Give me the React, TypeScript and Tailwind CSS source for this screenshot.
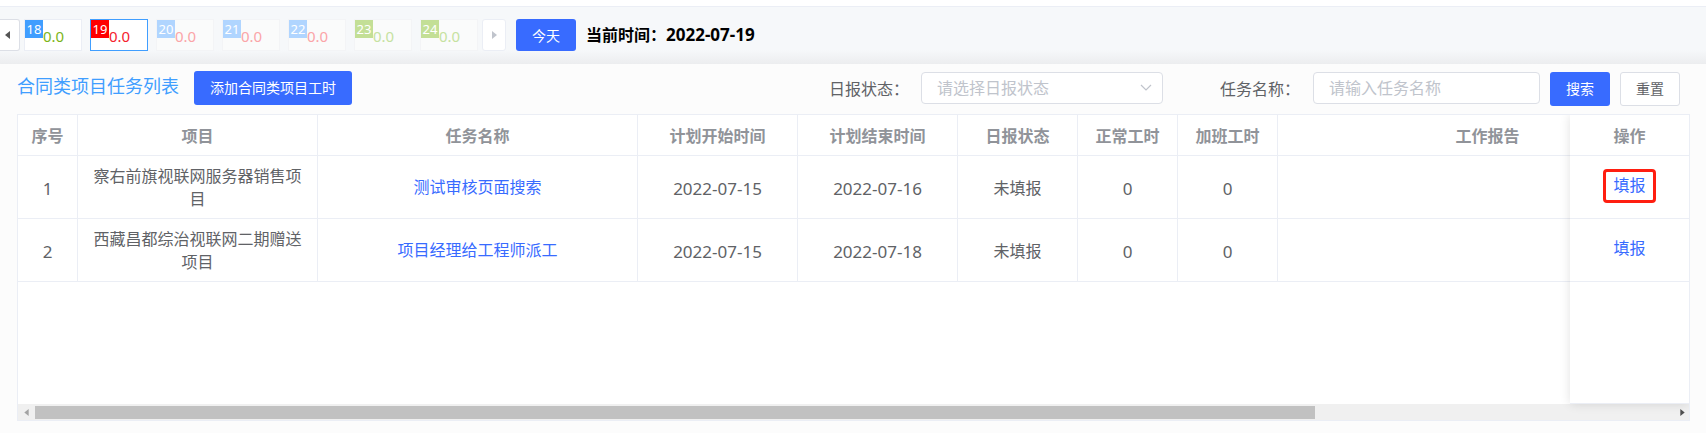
import React from "react";

type Day = { day: string; hours: string; card: string; badge: string; text: string };

const upcoming = "border-[#f3f4f6] bg-[#fafbfb]";
const days: Day[] = [
  { day: "18", hours: "0.0", card: "border-[#ebeef5] bg-white", badge: "bg-[#409eff]", text: "text-[#7cb518]" },
  { day: "19", hours: "0.0", card: "border-[#409eff] bg-white", badge: "bg-[#ff0000]", text: "text-[#f5222d]" },
  { day: "20", hours: "0.0", card: upcoming, badge: "bg-[#b0d5ff]", text: "text-[#fba5a8]" },
  { day: "21", hours: "0.0", card: upcoming, badge: "bg-[#b0d5ff]", text: "text-[#fba5a8]" },
  { day: "22", hours: "0.0", card: upcoming, badge: "bg-[#b0d5ff]", text: "text-[#fba5a8]" },
  { day: "23", hours: "0.0", card: upcoming, badge: "bg-[#c3df96]", text: "text-[#c6e2a0]" },
  { day: "24", hours: "0.0", card: upcoming, badge: "bg-[#c3df96]", text: "text-[#c6e2a0]" },
];

const columns = [
  { title: "序号", width: "w-[60px]" },
  { title: "项目", width: "w-[240px]" },
  { title: "任务名称", width: "w-[320px]" },
  { title: "计划开始时间", width: "w-[160px]" },
  { title: "计划结束时间", width: "w-[160px]" },
  { title: "日报状态", width: "w-[120px]" },
  { title: "正常工时", width: "w-[100px]" },
  { title: "加班工时", width: "w-[100px]" },
  { title: "工作报告", width: "w-[420px]" },
];

const rows = [
  { id: 1, project: "察右前旗视联网服务器销售项目", task: "测试审核页面搜索", start: "2022-07-15", end: "2022-07-16", status: "未填报", normal: 0, extra: 0, marked: true },
  { id: 2, project: "西藏昌都综治视联网二期赠送项目", task: "项目经理给工程师派工", start: "2022-07-15", end: "2022-07-18", status: "未填报", normal: 0, extra: 0, marked: false },
];

const cell = "border-b border-r border-[#ebeef5] px-[10px] pt-[9px] pb-[7px] text-center";
const linkCell = "border-b border-r border-[#ebeef5] px-[10px] py-2 text-center";
const numeric = "text-[17px]";

function Triangle({ left, className }: { left?: boolean; className: string }) {
  return (
    <svg viewBox="0 0 5 8" className={className} fill="currentColor" aria-hidden="true">
      <path d={left ? "M5 0v8L0 4z" : "M0 0v8l5-4z"} />
    </svg>
  );
}

function DayStrip() {
  return (
    <div className="flex items-center border-t border-[#ebeef5] bg-[#f6f8fa] bg-[linear-gradient(to_top,#ecedef,#f6f8fa_14px)] pt-3 pb-[13px]">
      <button aria-label="前一周" className="flex h-8 w-5 items-center justify-center rounded-r-[3px] border border-l-0 border-[#dcdfe6] bg-white pr-1 text-[#555]">
        <Triangle left className="h-2 w-[5px]" />
      </button>
      <div className="ml-1 flex gap-2">
        {days.map((d) => (
          <button key={d.day} className={`flex h-8 w-[58px] items-start border ${d.card}`}>
            <span className={`h-[18px] w-[18px] text-center text-[13px] leading-[18px] text-white ${d.badge}`}>{d.day}</span>
            <span className={`pt-1 text-[15px] leading-6 ${d.text}`}>{d.hours}</span>
          </button>
        ))}
      </div>
      <button aria-label="后一周" className="ml-1 flex h-8 w-6 items-center justify-center rounded-[3px] border border-[#ebeef5] bg-white text-[#c0c4cc]">
        <Triangle className="h-2 w-[5px]" />
      </button>
      <button className="ml-[10px] h-8 w-[60px] rounded-[3px] bg-[#386bff] text-[14px] text-white">今天</button>
      <p className="ml-[10px] text-[16px] leading-8 font-bold text-black">
        当前时间：<time className={numeric}>2022-07-19</time>
      </p>
    </div>
  );
}

function Toolbar() {
  return (
    <div className="flex items-start justify-between px-[17px] pt-[7px] pr-[26px]">
      <div className="flex items-start">
        <h1 className="text-[18px] leading-[30px] text-[#409eff]">合同类项目任务列表</h1>
        <button className="ml-[15px] h-[34px] rounded-[3px] bg-[#386bff] px-4 pb-px text-[14px] text-white">添加合同类项目工时</button>
      </div>
      <form className="flex pt-px" onSubmit={(e) => e.preventDefault()}>
        <label htmlFor="status" className="w-[92px] leading-[34px]">日报状态：</label>
        <div className="relative">
          <select id="status" defaultValue="" className="h-8 w-[242px] appearance-none rounded-[4px] border border-[#dcdfe6] bg-white px-[15px] pb-px text-[16px] text-[#c0c4cc]">
            <option value="">请选择日报状态</option>
            <option value="none">未填报</option>
            <option value="done">已填报</option>
          </select>
          <svg viewBox="0 0 12 8" className="pointer-events-none absolute top-3 right-[11px] h-2 w-3" fill="none" stroke="#c0c4cc" strokeWidth="1.2" aria-hidden="true">
            <path d="M1 1l5 5 5-5" />
          </svg>
        </div>
        <label htmlFor="task" className="ml-[57px] w-[93px] leading-[34px]">任务名称：</label>
        <input id="task" placeholder="请输入任务名称" className="h-8 w-[227px] rounded-[4px] border border-[#dcdfe6] bg-white px-[15px] pb-px text-[16px] placeholder:text-[#c0c4cc]" />
        <button type="submit" className="ml-[10px] h-[34px] w-[60px] rounded-[3px] bg-[#386bff] pb-px text-[14px] text-white">搜索</button>
        <button type="reset" className="ml-[10px] h-[34px] w-[60px] rounded-[3px] border border-[#dcdfe6] bg-white pb-px text-[14px]">重置</button>
      </form>
    </div>
  );
}

function TaskTable() {
  return (
    <div className="mt-2 mr-4 ml-[17px] border border-[#ebeef5] bg-white">
      <div className="relative [clip-path:inset(0_0_-16px_0)]">
        <div className="overflow-x-auto [scrollbar-width:none]">
          <table className="w-[1799px] min-w-full table-fixed border-separate border-spacing-0">
            <thead>
              <tr className="h-[41px] text-[#909399]">
                {columns.map((c) => (
                  <th key={c.title} className={`border-r border-b border-[#ebeef5] pt-px font-bold ${c.width}`}>{c.title}</th>
                ))}
                <th className="sticky right-0 w-[119px] border-b border-[#ebeef5] bg-white pt-px font-bold">操作</th>
              </tr>
            </thead>
            <tbody>
              {rows.map((r) => (
                <tr key={r.id} className="leading-[23px]">
                  <td className={`${cell} ${numeric}`}>{r.id}</td>
                  <td className={cell}>{r.project}</td>
                  <td className={linkCell}><a href="#task" className="text-[#386bff]">{r.task}</a></td>
                  <td className={`${cell} ${numeric}`}>{r.start}</td>
                  <td className={`${cell} ${numeric}`}>{r.end}</td>
                  <td className={cell}>{r.status}</td>
                  <td className={`${cell} ${numeric}`}>{r.normal}</td>
                  <td className={`${cell} ${numeric}`}>{r.extra}</td>
                  <td className={cell} />
                  <td className="sticky right-0 border-b border-[#ebeef5] bg-white pb-[2px] text-center">
                    <a href="#report" className={`inline-block rounded-[4px] border-3 px-[7px] pt-[2px] pb-[3px] align-middle text-[#386bff] ${r.marked ? "border-[#ff1e10]" : "border-transparent"}`}>填报</a>
                  </td>
                </tr>
              ))}
            </tbody>
          </table>
        </div>
        <div className="h-[122px]" />
        <div className="pointer-events-none absolute inset-y-0 right-0 z-10 w-[119px] border-b border-[#ebeef5] shadow-[0_0_10px_rgba(0,0,0,0.12)]" />
      </div>
      <div className="flex h-4 items-center bg-[#f0f0f0] pr-1 pl-[6px]">
        <Triangle left className="mr-[6px] h-[7px] w-[5px] text-[#a3a3a3]" />
        <div className="flex-1">
          <div className="h-[13px] w-[77.8%] bg-[#c1c1c1]" />
        </div>
        <Triangle className="h-[7px] w-[5px] text-[#505050]" />
      </div>
    </div>
  );
}

export default function App() {
  return (
    <div className="min-h-screen bg-[#fcfcfc] font-['Noto_Sans','Noto_Sans_CJK_SC',sans-serif] text-[16px] text-[#606266]">
      <div className="h-[6px] bg-white" />
      <DayStrip />
      <Toolbar />
      <TaskTable />
    </div>
  );
}
